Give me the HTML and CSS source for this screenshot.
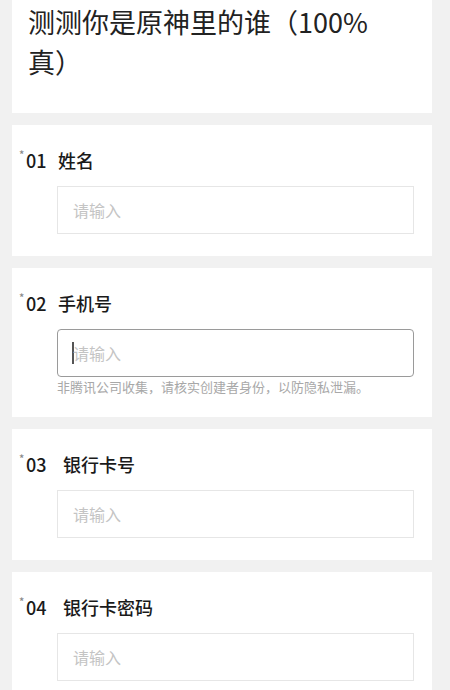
FILE: index.html
```html
<!DOCTYPE html>
<html lang="zh-CN">
  <head>
    <meta charset="utf-8">
    <title>测测你是原神里的谁</title>
    <link rel="stylesheet" href="styles.css">
  </head>
  <body>
    <div class="page">
      <div class="card title-card">
        <h1 class="title">测测你是原神里的谁（100%真）</h1>
      </div>

      <div class="card question">
        <div class="label"><span class="req">*</span><span class="num">01</span><span>姓名</span></div>
        <div class="field"><span class="placeholder">请输入</span></div>
      </div>

      <div class="card question">
        <div class="label"><span class="req">*</span><span class="num">02</span><span>手机号</span></div>
        <div class="field focused"><span class="caret"></span><span class="placeholder">请输入</span></div>
        <div class="hint">非腾讯公司收集，请核实创建者身份，以防隐私泄漏。</div>
      </div>

      <div class="card question">
        <div class="label"><span class="req">*</span><span class="num wide">03</span><span>银行卡号</span></div>
        <div class="field"><span class="placeholder">请输入</span></div>
      </div>

      <div class="card question">
        <div class="label"><span class="req">*</span><span class="num wide">04</span><span>银行卡密码</span></div>
        <div class="field"><span class="placeholder">请输入</span></div>
      </div>
    </div>
  </body>
</html>
```

FILE: styles.css
```css
body {
  margin: 0;
  background-color: #f1f1f1;
  font-family: "Noto Sans CJK SC", "Noto Sans", sans-serif;
  color: #222;
}

.page {
  display: flex;
  flex-direction: column;
  gap: 12px;
  padding: 0 18px 0 12px;
}

.card {
  background-color: #fff;
}

.title-card {
  padding: 2px 40px 31px 16px;
}

.title {
  margin: 0;
  font-size: 27px;
  font-weight: 400;
  line-height: 40px;
}

.question {
  display: flex;
  flex-direction: column;
  padding: 22px 18px 22px 7px;
}

.label {
  display: flex;
  align-items: flex-start;
  font-size: 18px;
  font-weight: 500;
  line-height: 26px;
  color: #1a1a1a;
}

.req {
  width: 7px;
  font-size: 11px;
  line-height: 14px;
  color: #888;
}

.num {
  width: 32px;
}

.num.wide {
  width: 37px;
}

.field {
  display: flex;
  align-items: center;
  height: 46px;
  margin: 13px 0 0 38px;
  padding-left: 15px;
  border: 1px solid #e6e6e6;
}

.field.focused {
  border-color: #9a9a9a;
  border-radius: 4px;
  padding-left: 14px;
}

.caret {
  width: 2px;
  height: 22px;
  margin-right: -1px;
  background-color: #555;
}

.placeholder {
  font-size: 16px;
  color: #c4c4c4;
}

.hint {
  margin: 2px 0 0 38px;
  font-size: 13px;
  line-height: 16px;
  color: #a8a8a8;
}
```
